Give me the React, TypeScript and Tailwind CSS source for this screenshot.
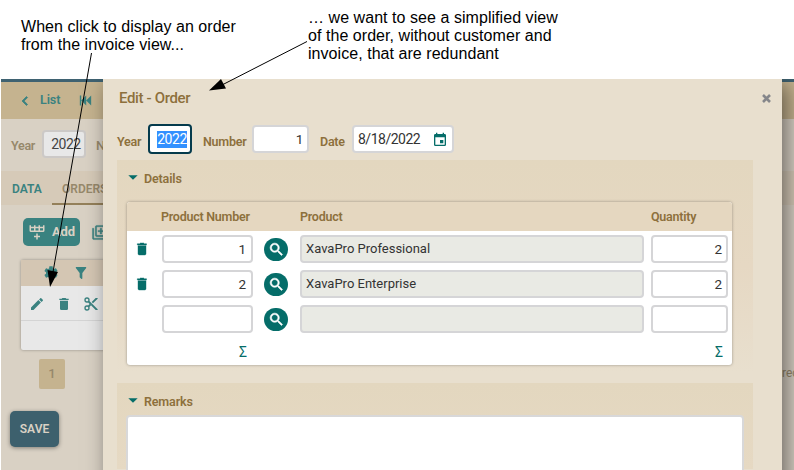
import type { ReactNode } from "react";

const ICONS = {
  chevronLeft: "M15.41,16.58L10.83,12L15.41,7.41L14,6L8,12L14,18L15.41,16.58Z",
  skipBackward: "M20,5V19L13,12M6,5V19H4V5M13,5V19L6,12",
  rowPlus:
    "M22,10A2,2 0 0,1 20,12H4A2,2 0 0,1 2,10V3H4V5H8V3H10V5H14V3H16V5H20V3H22V10M4,10H8V7H4V10M10,10H14V7H10V10M20,10V7H16V10H20M11,14H13V17H16V19H13V22H11V19H8V17H11V14Z",
  plusMultiple:
    "M4 6H2v14c0 1.1.9 2 2 2h14v-2H4V6zm16-4H8c-1.1 0-2 .9-2 2v12c0 1.1.9 2 2 2h12c1.1 0 2-.9 2-2V4c0-1.100-.9-2-2-2zm0 14H8V4h12v12zm-7-2h2v-3h3V9h-3V6h-2v3h-3v2h3z",
  cog: "M12,15.5A3.5,3.5 0 0,1 8.5,12A3.5,3.5 0 0,1 12,8.5A3.5,3.5 0 0,1 15.5,12A3.5,3.5 0 0,1 12,15.5M19.43,12.97C19.47,12.65 19.5,12.33 19.5,12C19.5,11.67 19.47,11.34 19.43,11L21.54,9.37C21.73,9.22 21.78,8.95 21.66,8.73L19.66,5.27C19.54,5.05 19.27,4.96 19.05,5.05L16.56,6.05C16.04,5.66 15.5,5.32 14.87,5.07L14.5,2.42C14.46,2.18 14.25,2 14,2H10C9.75,2 9.54,2.18 9.5,2.42L9.13,5.07C8.5,5.32 7.96,5.66 7.44,6.05L4.95,5.05C4.73,4.96 4.46,5.05 4.34,5.27L2.34,8.73C2.21,8.95 2.27,9.22 2.46,9.37L4.57,11C4.53,11.34 4.5,11.67 4.5,12C4.5,12.33 4.53,12.65 4.57,12.97L2.46,14.63C2.27,14.78 2.21,15.05 2.34,15.27L4.34,18.73C4.46,18.95 4.73,19.03 4.95,18.95L7.44,17.94C7.96,18.34 8.5,18.68 9.13,18.93L9.5,21.58C9.54,21.82 9.75,22 10,22H14C14.25,22 14.46,21.82 14.5,21.58L14.87,18.93C15.5,18.67 16.04,18.34 16.56,17.94L19.05,18.95C19.27,19.03 19.54,18.95 19.66,18.73L21.66,15.27C21.78,15.05 21.73,14.78 21.54,14.63L19.43,12.97Z",
  filter:
    "M14,12V19.88C14.04,20.18 13.94,20.5 13.71,20.71C13.32,21.1 12.69,21.1 12.3,20.71L10.29,18.7C10.06,18.47 9.96,18.16 10,17.87V12H9.97L4.21,4.62C3.87,4.19 3.95,3.56 4.38,3.22C4.57,3.08 4.78,3 5,3H19C19.22,3 19.43,3.08 19.62,3.22C20.05,3.56 20.13,4.19 19.79,4.62L14.03,12H14Z",
  pencil:
    "M20.71,7.04C21.1,6.65 21.1,6 20.71,5.63L18.37,3.29C18,2.9 17.35,2.9 16.96,3.29L15.12,5.12L18.87,8.87M3,17.25V21H6.75L17.81,9.93L14.06,6.18L3,17.25Z",
  trash:
    "M19,4H15.5L14.5,3H9.5L8.5,4H5V6H19M6,19A2,2 0 0,0 8,21H16A2,2 0 0,0 18,19V7H6V19Z",
  cut: "M19,3L13,9L15,11L22,4V3M12,12.5A0.5,0.5 0 0,1 11.5,12A0.5,0.5 0 0,1 12,11.5A0.5,0.5 0 0,1 12.5,12A0.5,0.5 0 0,1 12,12.5M6,20A2,2 0 0,1 4,18C4,16.89 4.9,16 6,16A2,2 0 0,1 8,18C8,19.11 7.1,20 6,20M6,8A2,2 0 0,1 4,6C4,4.89 4.9,4 6,4A2,2 0 0,1 8,6C8,7.11 7.1,8 6,8M9.64,7.64C9.87,7.14 10,6.59 10,6A4,4 0 0,0 6,2A4,4 0 0,0 2,6A4,4 0 0,0 6,10C6.59,10 7.14,9.87 7.64,9.64L10,12L7.64,14.36C7.14,14.13 6.59,14 6,14A4,4 0 0,0 2,18A4,4 0 0,0 6,22A4,4 0 0,0 10,18C10,17.41 9.87,16.86 9.64,16.36L12,14L19,21H22V20L9.64,7.64Z",
  magnify:
    "M9.5,3A6.5,6.5 0 0,1 16,9.5C16,11.11 15.41,12.59 14.44,13.73L14.71,14H15.5L20.5,19L19,20.5L14,15.5V14.71L13.73,14.44C12.59,15.41 11.11,16 9.5,16A6.5,6.5 0 0,1 3,9.5A6.5,6.5 0 0,1 9.5,3M9.5,5C7,5 5,7 5,9.5C5,12 7,14 9.5,14C12,14 14,12 14,9.5C14,7 12,5 9.5,5Z",
  calendar:
    "M19,19H5V8H19M16,1V3H8V1H6V3H5C3.89,3 3,3.89 3,5V19A2,2 0 0,0 5,21H19A2,2 0 0,0 21,19V5C21,3.89 20.1,3 19,3H18V1M17,12H12V17H17V12Z",
  menuDown: "M7,10L12,15L17,10H7Z",
};

function Icon({ name, className }: { name: keyof typeof ICONS; className: string }) {
  return (
    <svg viewBox="0 0 24 24" fill="currentColor" className={`shrink-0 ${className}`}>
      <path d={ICONS[name]} />
    </svg>
  );
}

function Field({ className, children }: { className: string; children?: ReactNode }) {
  return (
    <div
      className={`flex shrink-0 items-center rounded border-2 border-[#d5d5d7] text-[#333] ${className}`}
    >
      {children}
    </div>
  );
}

function BackgroundPage() {
  return (
    <div className="ml-px h-[391px] bg-[#d9d1c4]">
      <div className="h-[3px] bg-[#3f6271]" />
      <div className="flex h-[37px] items-center bg-[#c5b38f] text-[#3a8280]">
        <Icon name="chevronLeft" className="ml-[15px] size-[18px] stroke-current stroke-1" />
        <span className="ml-[6px] w-[37px] text-[12.5px] font-semibold tracking-[-0.1px]">List</span>
        <Icon name="skipBackward" className="size-[17px]" />
      </div>
      <div className="flex h-[52px] items-start pt-[11px]">
        <span className="ml-[10px] mt-[6px] w-[31px] text-[12.500px] font-semibold leading-5 tracking-[-0.3px] text-[#96886b]">Year</span>
        <div className="flex h-7 w-11 items-center justify-center rounded border-2 border-[#ccc9c7] bg-[#e8e8e8] pl-1 text-[14px] tracking-[-0.5px] text-[#444]">
          2022
        </div>
        <span className="ml-[10px] mt-[6px] text-[13px] font-medium leading-5 text-[#96886b]">Number</span>
      </div>
      <div className="flex h-[34px] bg-[#d6cab8] text-[12px] font-semibold leading-[36px]">
        <span className="w-[50px] pl-[11px] text-[#3a8280]">DATA</span>
        <span className="ml-px w-[70px] border-b-2 border-[#94805a] pl-[10px] text-[#96886b]">ORDERS</span>
      </div>
      <div className="flex h-[55px] items-start pl-[22px] pt-[13px] text-[#3a8280]">
        <div className="flex h-[28px] w-[57px] items-center rounded-[5px] bg-[#3a8280] pl-[5px] text-[#d9d1c4]">
          <Icon name="rowPlus" className="size-[18px]" />
          <span className="ml-[6px] text-[13px] font-bold tracking-[-0.2px]">Add</span>
        </div>
        <Icon name="plusMultiple" className="ml-[11px] mt-[6px] size-[17px] stroke-current stroke-[0.5]" />
      </div>
      <div className="ml-5 h-[90px] w-[700px] rounded-[2px] bg-[#e8e8e8] text-[#3a8280] shadow-[0_0_3px_rgba(0,0,0,0.35)]">
        <div className="flex h-[26px] items-center bg-[#d4c6b3] pl-[22px]">
          <Icon name="cog" className="size-4" />
          <Icon name="filter" className="ml-[14px] size-4" />
        </div>
        <div className="flex h-[35px] items-center border-b border-[#d4d4d4] pl-[8px]">
          <Icon name="pencil" className="mt-px size-4" />
          <Icon name="trash" className="ml-[11px] mt-px size-4" />
          <Icon name="cut" className="ml-[11px] mt-px size-4" />
        </div>
      </div>
      <div className="flex items-start justify-between pt-[9px] text-[13px] text-[#96886b]">
        <div className="ml-[38px] flex h-[30px] w-[26px] items-center justify-center rounded-[2px] bg-[#c5b38f] font-medium">1</div>
        <span className="mt-[5px] w-[12px] overflow-hidden text-[12px] whitespace-nowrap">records</span>
      </div>
      <div className="ml-[9px] mt-[22px] flex h-[36px] w-[49px] items-center justify-center rounded-[5px] bg-[#3d606d] text-[12px] font-semibold text-[#d9d1c4] shadow-[0_1px_4px_rgba(0,0,0,0.4)]">
        SAVE
      </div>
    </div>
  );
}

const ROWS = [
  { number: "1", product: "XavaPro Professional", quantity: "2" },
  { number: "2", product: "XavaPro Enterprise", quantity: "2" },
  { number: "", product: "", quantity: "" },
];

function DetailsTable() {
  return (
    <div className="ml-[10px] h-[163px] w-[605px] rounded-[3px] bg-white text-[#056d69] shadow-[0_0_3px_rgba(0,0,0,0.35)]">
      <div className="flex h-[29px] items-center rounded-t-[3px] bg-[#e5d7c0] pt-px text-[12.5px] font-semibold tracking-[-0.25px] text-[#8d703c]">
        <span className="ml-[34px] w-[139px]">Product Number</span>
        <span className="w-[351px]">Product</span>
        <span>Quantity</span>
      </div>
      <div className="flex flex-col pt-1">
        {ROWS.map((row, i) => (
          <div key={i} className="flex h-[35px] items-start">
            <div className="ml-[7px] mt-[6px] w-[28px]">
              {row.number && <Icon name="trash" className="size-4 stroke-current stroke-[0.6]" />}
            </div>
            <Field className="h-7 w-[91px] justify-end bg-white pr-[5px] text-[13.5px]">{row.number}</Field>
            <div className="ml-[11px] mt-[3px] flex h-[23px] w-[24px] items-center justify-center rounded-full bg-[#056d69] text-white">
              <Icon name="magnify" className="size-[17px] stroke-current stroke-[0.8]" />
            </div>
            <Field className="ml-[12px] h-7 w-[344px] bg-[#e9eae4] pl-[4px] text-[13px]">{row.product}</Field>
            <Field className="ml-[7px] h-7 w-[77px] justify-end bg-white pr-[4px] text-[13.5px]">{row.quantity}</Field>
          </div>
        ))}
      </div>
      <div className="flex justify-between pl-[112px] pr-[9px] pt-[3px] text-[14px] leading-[18px]">
        <span>Σ</span>
        <span>Σ</span>
      </div>
    </div>
  );
}

function OrderDialog() {
  return (
    <div className="absolute left-[103px] top-[79px] h-[391px] w-[679px] overflow-hidden bg-[#e8dfce]">
      <div className="flex h-[45px] items-start justify-between pl-4 pr-[11px] pt-[9px]">
        <h1 className="text-[15px] font-medium leading-5 tracking-[-0.35px] text-[#8d703c]">Edit - Order</h1>
        <svg viewBox="0 0 9 9" className="mt-[6px] size-[9px] stroke-[#85868a] stroke-[2.6]">
          <path d="M1 1L8 8M8 1L1 8" />
        </svg>
      </div>
      <div className="flex h-[36px] items-start text-[12.5px] font-semibold tracking-[-0.25px] text-[#8d703c]">
        <span className="ml-[14px] mt-[8px] w-[31px] leading-5">Year</span>
        <div className="flex h-[30px] w-11 items-center justify-end rounded border-2 border-[#053b4d] bg-white pr-[3px] text-[14px] font-normal leading-[17px] tracking-[-0.4px] text-white">
          <span className="bg-[#3390ff]">2022</span>
        </div>
        <span className="ml-[11px] mt-[8px] w-[49px] leading-5">Number</span>
        <Field className="mt-px h-[28px] w-[57px] justify-end bg-white pr-[4px] text-[13.5px] font-normal">1</Field>
        <span className="ml-[11px] mt-[8px] w-[32px] leading-5">Date</span>
        <Field className="mt-px h-[28px] w-[102px] justify-between bg-white pl-[4px] pr-[4px] text-[14px] font-normal tracking-[-0.5px]">
          <span>8/18/2022</span>
          <Icon name="calendar" className="mt-[2px] size-4 text-[#056d69]" />
        </Field>
      </div>
      <section className="ml-[14px] h-[213px] w-[636px] bg-linear-to-b from-[#e3d7bf] via-[#e6d8c3] to-[#e8dfce]">
        <h2 className="flex h-[42px] items-start pl-2 pt-[9px] text-[12.5px] font-semibold leading-5 tracking-[-0.15px] text-[#8d703c]">
          <Icon name="menuDown" className="mr-[3px] size-4 scale-140 text-[#056d69]" />
          Details
        </h2>
        <DetailsTable />
      </section>
      <section className="ml-[14px] mt-[10px] h-[86px] w-[636px] bg-linear-to-b from-[#e3d7bf] to-[#e6d9c3]">
        <h2 className="flex h-[32px] items-start pl-2 pt-[9px] text-[12.5px] font-semibold leading-5 tracking-[-0.15px] text-[#8d703c]">
          <Icon name="menuDown" className="mr-[3px] size-4 scale-140 text-[#056d69]" />
          Remarks
        </h2>
        <div className="ml-[9px] h-[70px] w-[618px] rounded border-2 border-[#d8d8d9] bg-white" />
      </section>
    </div>
  );
}

function Arrows() {
  return (
    <svg viewBox="0 0 794 470" className="pointer-events-none absolute inset-0 size-full fill-black stroke-black">
      <path d="M91.500 53L53 272" />
      <path d="M50 287L47.500 270L58 272Z" stroke="none" />
      <path d="M307 41.500L222 85" />
      <path d="M209 90.500L221 79L226 88.500Z" stroke="none" />
    </svg>
  );
}

export default function App() {
  return (
    <div className="relative h-[470px] w-[794px] overflow-hidden bg-white font-[Roboto,sans-serif]">
      <div className="flex h-[79px] font-['Liberation_Sans',Arial,sans-serif] text-[16px] leading-[18px] tracking-[0.05px] text-black">
        <p className="ml-[21px] mt-[18px] w-[287px] whitespace-nowrap">
          When click to display an order
          <br />
          from the invoice view...
        </p>
        <p className="mt-[9px] whitespace-nowrap">
          … we want to see a simplified view
          <br />
          of the order, without customer and
          <br />
          invoice, that are redundant
        </p>
      </div>
      <BackgroundPage />
      <div className="absolute inset-x-0 bottom-0 top-[79px] overflow-hidden">
        <div className="absolute left-[103px] top-0 h-[420px] w-[679px] shadow-[5px_5px_20px_rgba(0,0,0,0.5)]" />
      </div>
      <OrderDialog />
      <Arrows />
    </div>
  );
}
